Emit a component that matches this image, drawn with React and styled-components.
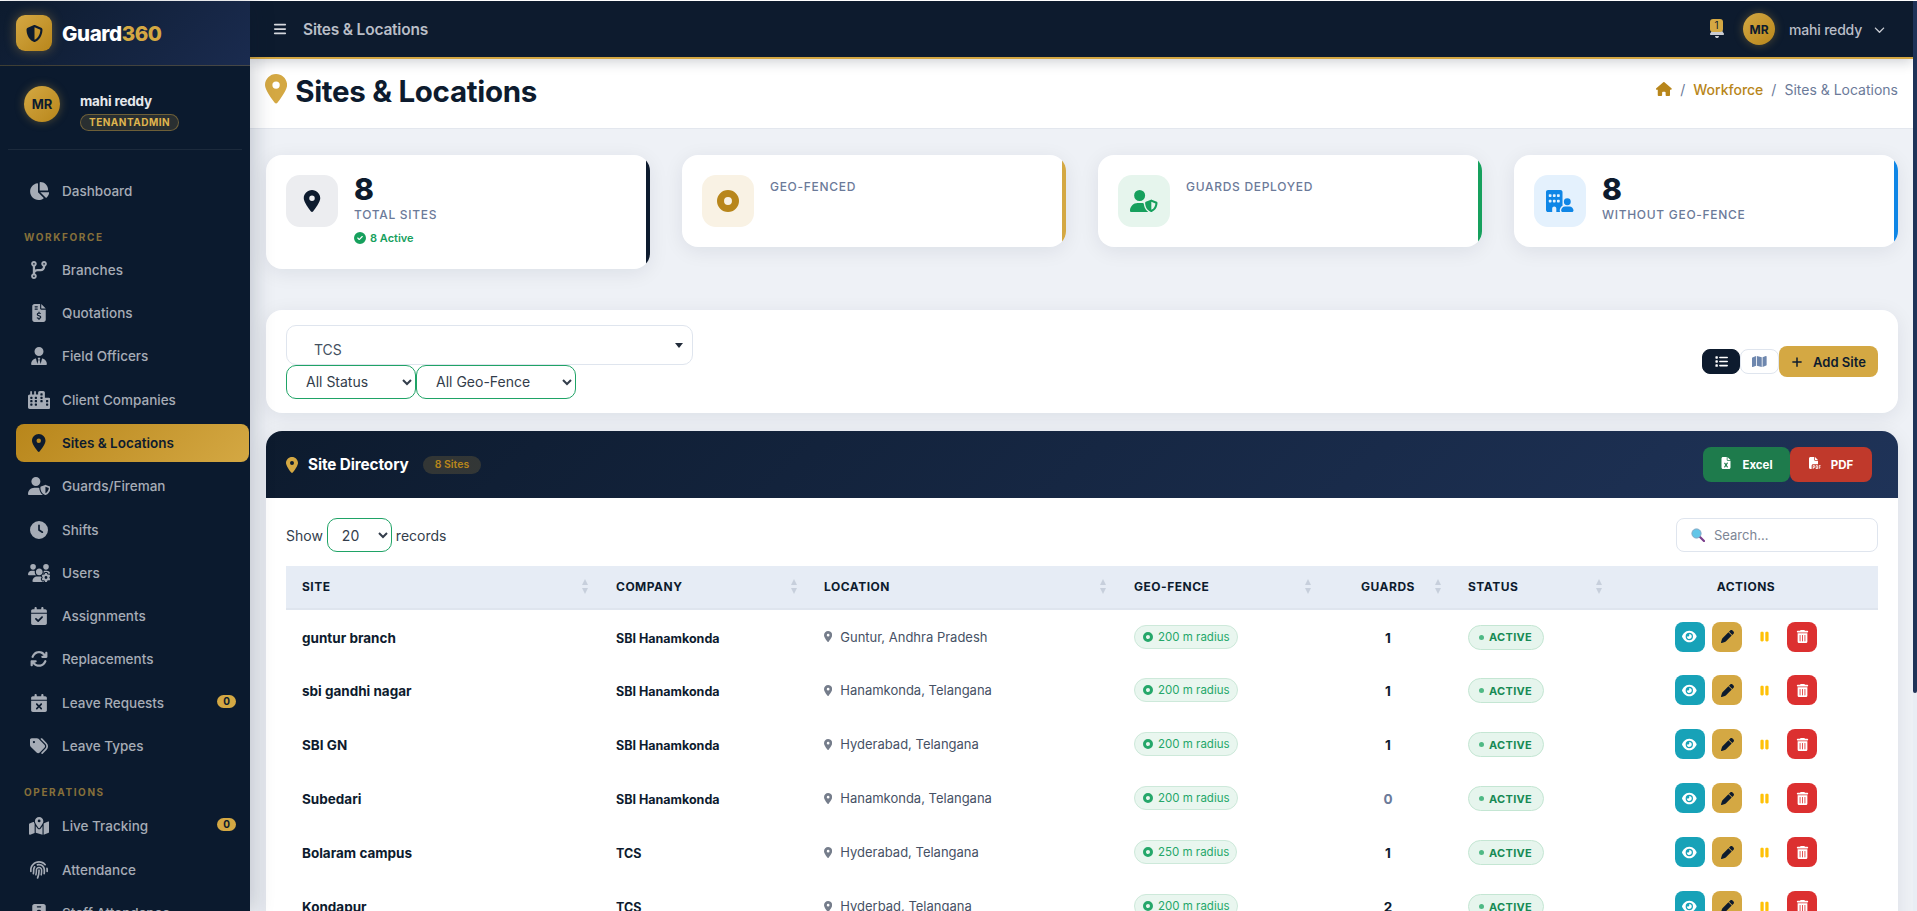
import React from "react";
import styled, { createGlobalStyle } from "styled-components";
import {
  FaArrowsRotate, FaBars, FaBell, FaBuildingUser, FaCalendarCheck, FaCalendarXmark, FaChartPie,
  FaChevronDown, FaCircleCheck, FaCity, FaClock, FaCodeBranch, FaEye, FaFileExcel, FaFileInvoiceDollar,
  FaFilePdf, FaFingerprint, FaHouse, FaIdBadge, FaList, FaLocationDot, FaMap, FaMapLocationDot, FaPause,
  FaPen, FaPlus, FaShieldHalved, FaTags, FaTrashCan, FaUserShield, FaUserTie, FaUsersGear,
} from "react-icons/fa6";

const GlobalStyle = createGlobalStyle`
  html, body { margin: 0; padding: 0; height: 100%; overflow: hidden; background: #fff; }
  body { font-family: "Inter", "Liberation Sans", sans-serif; color: #0d1b2e; }
  * { box-sizing: border-box; }
`;

// FA glyphs are 1em tall and as wide as they need, react-icons squeezes them in a square
const glyph = (Icon, ratio) => styled(Icon)`
  width: ${ratio}em;
  height: 1em;
  flex: none;
`;

const PinIcon = glyph(FaLocationDot, 0.75);
const PieIcon = glyph(FaChartPie, 1.125);
const CityIcon = glyph(FaCity, 1.25);
const UserShieldIcon = glyph(FaUserShield, 1.25);
const UsersGearIcon = glyph(FaUsersGear, 1.25);
const MapPinIcon = glyph(FaMapLocationDot, 1.125);
const BuildingUserIcon = glyph(FaBuildingUser, 1.25);
const HouseIcon = glyph(FaHouse, 1.125);
const MapIcon = glyph(FaMap, 1.125);
const EyeIcon = glyph(FaEye, 1.125);

const Shell = styled.div`
  display: flex;
  height: 911px;
  padding-top: 1px;
  overflow: hidden;
  background: #fff;
`;

const Sidebar = styled.aside`
  width: 250px;
  flex: none;
  background: #0b1a2e;
  position: relative;
  z-index: 3;
  box-shadow: 4px 0 20px rgba(13, 27, 46, 0.2);
  overflow: hidden;
`;

const Brand = styled.div`
  height: 65px;
  display: flex;
  align-items: center;
  gap: 10px;
  padding: 0 16px;
  background: linear-gradient(135deg, #0d1b2e, #1a2b4f);
  border-bottom: 1px solid rgba(212, 168, 67, 0.25);
`;

const BrandMark = styled.div`
  width: 36px;
  height: 36px;
  border-radius: 9px;
  display: flex;
  align-items: center;
  justify-content: center;
  color: #0d1b2e;
  font-size: 17px;
  background: linear-gradient(135deg, #d4a843, #b8861b);
  box-shadow: 0 0 12px rgba(212, 168, 67, 0.4);
`;

const BrandName = styled.div`
  font-size: 20.5px;
  font-weight: 800;
  letter-spacing: -0.4px;
  color: #fff;
  span { color: #d4a843; }
`;

const Profile = styled.div`
  margin: 0 8px;
  height: 84px;
  display: flex;
  align-items: flex-start;
  gap: 20px;
  padding: 20px 0 0 16px;
  border-bottom: 1px solid rgba(255, 255, 255, 0.07);
`;

const Avatar = styled.div`
  width: ${(p) => p.size}px;
  height: ${(p) => p.size}px;
  flex: none;
  border-radius: 50%;
  display: flex;
  align-items: center;
  justify-content: center;
  font-size: ${(p) => (p.size > 32 ? 13 : 12)}px;
  font-weight: 700;
  color: #0d1b2e;
  background: linear-gradient(135deg, #d4a843, #b8861b);
  box-shadow: 0 0 10px rgba(212, 168, 67, 0.35);
`;

const ProfileName = styled.div`
  font-size: 13.5px;
  font-weight: 700;
  letter-spacing: -0.2px;
  color: #e6e8ec;
  line-height: 18px;
  margin-top: 6px;
`;

const RoleBadge = styled.div`
  display: inline-block;
  height: 17px;
  line-height: 15px;
  padding: 0 8px;
  margin-top: 2px;
  border-radius: 9px;
  border: 1px solid rgba(212, 168, 67, 0.4);
  background: rgba(212, 168, 67, 0.15);
  color: #dfb44e;
  font-size: 10px;
  font-weight: 700;
  letter-spacing: 0.5px;
`;

const Nav = styled.nav`
  padding: 21.5px 0 0 16px;
  display: flex;
  flex-direction: column;
`;

const SectionLabel = styled.div`
  height: 18px;
  line-height: 18px;
  margin: ${(p) => (p.first ? "13px 0 5px 8px" : "13px 0 6px 8px")};
  font-size: 10px;
  font-weight: 700;
  letter-spacing: 1.6px;
  color: #86703a;
`;

const NavItem = styled.div`
  height: 38px;
  margin-bottom: 5.3px;
  width: 233px;
  flex: none;
  display: flex;
  align-items: center;
  padding: 0 13px 0 12px;
  border-radius: 8px;
  font-size: 13.5px;
  font-weight: ${(p) => (p.active ? 600 : 500)};
  color: ${(p) => (p.active ? "#0d1b2e" : "#a6acb6")};
  background: ${(p) => (p.active ? "linear-gradient(135deg, #b8861b, #d4a843)" : "transparent")};
`;

const NavIcon = styled.span`
  width: 22px;
  margin-right: 12px;
  flex: none;
  display: flex;
  justify-content: center;
  font-size: 18px;
`;

const NavCount = styled.span`
  margin-left: auto;
  margin-top: -3px;
  width: 19px;
  height: 13px;
  border-radius: 7px;
  background: #d4a843;
  color: #0d1b2e;
  font-size: 10px;
  font-weight: 700;
  line-height: 13px;
  text-align: center;
`;

const Main = styled.main`
  flex: 1;
  min-width: 0;
  background: #eef1f6;
  overflow: hidden;
`;

const Topbar = styled.header`
  height: 58px;
  display: flex;
  align-items: center;
  padding: 0 28px 0 23px;
  background: #0d1b2e;
  border-bottom: 2px solid #d4a843;
  position: relative;
  z-index: 2;
  box-shadow: 0 3px 12px rgba(13, 27, 46, 0.2);
`;

const MenuIcon = styled.span`
  display: flex;
  color: #d5d8dd;
  font-size: 14px;
  margin-right: 16px;
`;

const TopTitle = styled.div`
  font-size: 15.5px;
  font-weight: 600;
  letter-spacing: -0.2px;
  color: #b9bec7;
`;

const TopRight = styled.div`
  margin-left: auto;
  display: flex;
  align-items: center;
`;

const Bell = styled.div`
  position: relative;
  display: flex;
  color: #c9ccd2;
  font-size: 16px;
  margin: 2px 18px 0 0;
`;

const BellCount = styled.span`
  position: absolute;
  top: -3px;
  left: 1px;
  width: 13px;
  height: 13px;
  border-radius: 3px;
  background: #d4a843;
  color: #0d1b2e;
  font-size: 10px;
  line-height: 13px;
  text-align: center;
`;

const UserName = styled.div`
  margin: 0 12px 0 14px;
  font-size: 14px;
  font-weight: 500;
  letter-spacing: -0.2px;
  color: #b9bec7;
`;

const Chevron = styled.span`
  display: flex;
  color: #c9ccd2;
  font-size: 11px;
`;

const PageHeader = styled.section`
  height: 70px;
  background: #fff;
  border-bottom: 1px solid #e3e7ee;
  display: flex;
  justify-content: space-between;
  padding: 14px 15px 0 15px;
`;

const Title = styled.h1`
  margin: 0;
  height: 36px;
  display: flex;
  align-items: center;
  gap: 8px;
  font-size: 29.5px;
  font-weight: 700;
  letter-spacing: -0.3px;
  color: #0d1b2e;
  svg { color: #d4a843; margin-top: -4px; }
`;

const Crumbs = styled.div`
  display: flex;
  align-items: center;
  height: 32px;
  font-size: 14px;
  color: #6b7a99;
`;

const CrumbSep = styled.span`
  margin: 0 8px;
`;

const CrumbLink = styled.span`
  display: flex;
  color: #b8861b;
  font-weight: 500;
`;

const Content = styled.div`
  padding: 26px 15px 0 16px;
`;

const StatRow = styled.div`
  display: grid;
  grid-template-columns: repeat(4, 1fr);
  gap: 32px;
  align-items: start;
  margin-bottom: 41px;
`;

const StatCard = styled.div`
  position: relative;
  overflow: hidden;
  display: flex;
  gap: 16px;
  padding: 20px;
  background: #fff;
  border-radius: 16px;
  box-shadow: 0 4px 20px rgba(13, 27, 46, 0.08);
  &::after {
    content: "";
    position: absolute;
    top: 0;
    right: 0;
    bottom: 0;
    width: 4px;
    background: ${(p) => p.accent};
  }
`;

const StatIcon = styled.div`
  width: 52px;
  height: 52px;
  flex: none;
  border-radius: 14px;
  display: flex;
  align-items: center;
  justify-content: center;
  font-size: 22px;
  color: ${(p) => p.color};
  background: ${(p) => p.bg};
`;

const StatValue = styled.div`
  font-size: 30px;
  line-height: 28px;
  font-weight: 800;
  color: #0d1b2e;
`;

const StatLabel = styled.div`
  font-size: 12px;
  line-height: 24px;
  font-weight: 500;
  letter-spacing: 0.7px;
  color: #6b7a99;
`;

const StatNote = styled.div`
  display: flex;
  align-items: center;
  gap: 4px;
  height: 22px;
  font-size: 11px;
  font-weight: 600;
  color: #16a05d;
`;

const FilterCard = styled.section`
  height: 103px;
  margin-bottom: 18px;
  padding: 15px 20px;
  display: flex;
  justify-content: space-between;
  align-items: center;
  background: #fff;
  border-radius: 16px;
  box-shadow: 0 4px 20px rgba(13, 27, 46, 0.08);
`;

const FilterFields = styled.div`
  display: flex;
  flex-direction: column;
  align-items: flex-start;
`;

const ComboBox = styled.div`
  position: relative;
  width: 407px;
  height: 40px;
  padding: 16px 0 0 27px;
  border: 1px solid #dfe5ee;
  border-radius: 10px;
  font-size: 14px;
  line-height: 16px;
  color: #44505f;
`;

const ComboArrow = styled.span`
  position: absolute;
  right: 9px;
  top: 17px;
  border-left: 4px solid transparent;
  border-right: 4px solid transparent;
  border-top: 5px solid #222c3a;
`;

const SelectRow = styled.div`
  display: flex;
`;

const GreenSelect = styled.select`
  width: ${(p) => p.w}px;
  height: ${(p) => p.h}px;
  padding: 0 ${(p) => p.pad}px;
  font-family: "Inter", "Liberation Sans", sans-serif;
  font-size: 14px;
  color: #333d4b;
  background: #fff;
  border: 1px solid #1fa366;
  border-radius: 10px;
  outline: none;
`;

const FilterActions = styled.div`
  display: flex;
  align-items: center;
`;

const ViewToggle = styled.button`
  width: ${(p) => p.w}px;
  height: 25px;
  padding: 0;
  display: flex;
  align-items: center;
  justify-content: center;
  font-size: 13px;
  color: ${(p) => (p.active ? "#fff" : "#6e87ae")};
  background: ${(p) => (p.active ? "#0d1b2e" : "#fff")};
  border: 1px solid ${(p) => (p.active ? "#0d1b2e" : "#dfe5ee")};
  border-radius: 8px;
`;

const AddButton = styled.button`
  width: 99px;
  height: 31px;
  padding: 0;
  display: flex;
  align-items: center;
  justify-content: center;
  gap: 10px;
  font-family: inherit;
  font-size: 13px;
  font-weight: 600;
  color: #0d1b2e;
  background: #d4a843;
  border: 0;
  border-radius: 8px;
`;

const TableCard = styled.section`
  background: #fff;
  border-radius: 16px 16px 0 0;
  box-shadow: 0 4px 20px rgba(13, 27, 46, 0.08);
`;

const TableHead = styled.div`
  height: 67px;
  padding: 0 26px 0 20px;
  display: flex;
  align-items: center;
  background: linear-gradient(135deg, #0d1b2e, #1f3358);
  border-radius: 16px 16px 0 0;
`;

const TableTitle = styled.div`
  display: flex;
  align-items: center;
  gap: 10px;
  font-size: 15.3px;
  font-weight: 700;
  letter-spacing: -0.1px;
  color: #fff;
  svg { color: #d4a843; font-size: 16px; }
`;

const CountChip = styled.span`
  margin-left: 14px;
  height: 18px;
  line-height: 18px;
  padding: 0 12px;
  border-radius: 9px;
  background: rgba(212, 168, 67, 0.18);
  color: #b8861b;
  font-size: 10.5px;
  font-weight: 600;
`;

const ExportGroup = styled.div`
  margin-left: auto;
  display: flex;
`;

const ExportButton = styled.button`
  width: ${(p) => p.w}px;
  height: 35px;
  padding: 0;
  display: flex;
  align-items: center;
  justify-content: center;
  gap: 10px;
  font-family: inherit;
  font-size: 11.5px;
  font-weight: 700;
  color: #fff;
  background: ${(p) => p.bg};
  border: 0;
  border-radius: 8px;
  svg { font-size: 12px; margin-top: -4px; }
`;

const TableBody = styled.div`
  padding: 20px 20px 0;
`;

const Controls = styled.div`
  display: flex;
  justify-content: space-between;
  align-items: center;
  height: 34px;
  margin-bottom: 14px;
`;

const ShowLabel = styled.label`
  display: flex;
  align-items: center;
  gap: 4px;
  font-size: 14px;
  color: #333d4b;
`;

const SearchBox = styled.div`
  width: 202px;
  height: 34px;
  display: flex;
  align-items: center;
  gap: 9px;
  padding: 0 14px;
  border: 1px solid #dfe5ee;
  border-radius: 8px;
  font-size: 13px;
  color: #7d8695;
`;

const Table = styled.table`
  width: 1592px;
  border-collapse: collapse;
  table-layout: fixed;
`;

const Th = styled.th`
  position: relative;
  height: 43px;
  padding: 0 ${(p) => p.pr || 16}px 2px ${(p) => p.pl || 16}px;
  background: #e6ecf5;
  border-bottom: 2px solid #dfe5ee;
  text-align: ${(p) => p.align || "left"};
  font-size: 12px;
  font-weight: 700;
  letter-spacing: 0.5px;
  color: #0d1b2e;
`;

const SortMark = styled.span`
  position: absolute;
  top: 13px;
  right: ${(p) => p.right}px;
  display: flex;
  flex-direction: column;
  gap: 3px;
  &::before, &::after {
    content: "";
    border-left: 3.5px solid transparent;
    border-right: 3.5px solid transparent;
  }
  &::before { border-bottom: 6px solid #c7cfdc; }
  &::after { border-top: 6px solid #c7cfdc; }
`;

const Td = styled.td`
  height: 54px;
  padding: 0 ${(p) => p.pr || 16}px 0 ${(p) => p.pl || 16}px;
  text-align: ${(p) => p.align || "left"};
`;

const SiteName = styled.span`
  font-size: 13.5px;
  font-weight: 700;
  color: #0d1b2e;
`;

const CompanyName = styled.span`
  font-size: 12.5px;
  font-weight: 700;
  color: #0d1b2e;
`;

const Place = styled.span`
  display: flex;
  align-items: center;
  gap: 8px;
  font-size: 13px;
  color: #465165;
  svg { color: #757d8b; font-size: 11px; }
`;

const FencePill = styled.span`
  display: inline-flex;
  align-items: center;
  gap: 5px;
  height: 24px;
  padding: 0 7px 0 8px;
  border: 1px solid #cde9da;
  border-radius: 12px;
  background: #e9f6ef;
  font-size: 11.5px;
  color: #25a76a;
`;

const GuardCount = styled.span`
  font-size: 13.5px;
  font-weight: 700;
  color: ${(p) => (p.empty ? "#6b7a99" : "#0d1b2e")};
`;

const StatusPill = styled.span`
  display: inline-flex;
  align-items: center;
  gap: 5px;
  height: 25px;
  padding: 0 11px 0 10px;
  border: 1px solid #c4e6d3;
  border-radius: 13px;
  background: #e6f5ed;
  font-size: 11px;
  font-weight: 700;
  letter-spacing: 0.3px;
  color: #168a54;
  &::before {
    content: "";
    width: 5px;
    height: 5px;
    border-radius: 50%;
    background: #4fb985;
  }
`;

const ActionGroup = styled.div`
  display: flex;
  justify-content: center;
  gap: 7.5px;
`;

const ActionButton = styled.button`
  width: 30px;
  height: 30px;
  padding: 0;
  display: flex;
  align-items: center;
  justify-content: center;
  font-size: 13px;
  color: ${(p) => p.color};
  background: ${(p) => p.bg};
  border: 0;
  border-radius: 8px;
`;

const ScrollRail = styled.div`
  width: 4px;
  flex: none;
  background: #e9edf4;
`;

const ScrollThumb = styled.div`
  height: 692px;
  background: #1f3358;
  border-radius: 0 0 2px 2px;
`;

const Ring = ({ size, hole = 0.36 }) => (
  <svg width={size} height={size} viewBox="0 0 24 24" aria-hidden="true">
    <circle cx="12" cy="12" r={12 - (12 * (1 - hole)) / 2} fill="none" stroke="currentColor" strokeWidth={12 * (1 - hole)} />
  </svg>
);

const Magnifier = () => (
  <svg width="14" height="14" viewBox="0 0 14 14" aria-hidden="true">
    <line x1="8.5" y1="8.5" x2="13" y2="13" stroke="#7b3f8c" strokeWidth="2.2" strokeLinecap="round" />
    <circle cx="5.5" cy="5.5" r="4.6" fill="#62c6e8" stroke="#7fa6c4" strokeWidth="1" />
  </svg>
);

const workforce = [
  { label: "Branches", icon: <FaCodeBranch /> },
  { label: "Quotations", icon: <FaFileInvoiceDollar /> },
  { label: "Field Officers", icon: <FaUserTie /> },
  { label: "Client Companies", icon: <CityIcon /> },
  { label: "Sites & Locations", icon: <PinIcon />, active: true },
  { label: "Guards/Fireman", icon: <UserShieldIcon /> },
  { label: "Shifts", icon: <FaClock /> },
  { label: "Users", icon: <UsersGearIcon /> },
  { label: "Assignments", icon: <FaCalendarCheck /> },
  { label: "Replacements", icon: <FaArrowsRotate /> },
  { label: "Leave Requests", icon: <FaCalendarXmark />, count: 0 },
  { label: "Leave Types", icon: <FaTags /> },
];

const operations = [
  { label: "Live Tracking", icon: <MapPinIcon />, count: 0 },
  { label: "Attendance", icon: <FaFingerprint /> },
  { label: "Staff Attendance", icon: <FaIdBadge /> },
];

const stats = [
  { value: "8", label: "TOTAL SITES", accent: "#0d1b2e", color: "#0d1b2e", bg: "#ecedf0", icon: <FaLocationDot />, note: "8 Active" },
  { label: "GEO-FENCED", accent: "#d4a843", color: "#b8861b", bg: "#f9f2e4", icon: <Ring size={22} /> },
  { label: "GUARDS DEPLOYED", accent: "#16a05d", color: "#16a05d", bg: "#e6f5ed", icon: <UserShieldIcon /> },
  { value: "8", label: "WITHOUT GEO-FENCE", accent: "#0f86e6", color: "#0f86e6", bg: "#e4f1fd", icon: <BuildingUserIcon /> },
];

const columns = [
  { key: "site", label: "SITE", width: 314, sort: 12 },
  { key: "company", label: "COMPANY", width: 208, sort: 11 },
  { key: "location", label: "LOCATION", width: 310, sort: 12 },
  { key: "fence", label: "GEO-FENCE", width: 210, sort: 17 },
  { key: "guards", label: "GUARDS", width: 124, sort: 11, align: "center", pr: 20 },
  { key: "status", label: "STATUS", width: 160, sort: 10 },
  { key: "actions", label: "ACTIONS", width: 266, align: "center", pl: 18 },
];

const sites = [
  { name: "guntur branch", company: "SBI Hanamkonda", place: "Guntur, Andhra Pradesh", radius: 200, guards: 1 },
  { name: "sbi gandhi nagar", company: "SBI Hanamkonda", place: "Hanamkonda, Telangana", radius: 200, guards: 1 },
  { name: "SBI GN", company: "SBI Hanamkonda", place: "Hyderabad, Telangana", radius: 200, guards: 1 },
  { name: "Subedari", company: "SBI Hanamkonda", place: "Hanamkonda, Telangana", radius: 200, guards: 0 },
  { name: "Bolaram campus", company: "TCS", place: "Hyderabad, Telangana", radius: 250, guards: 1 },
  { name: "Kondapur", company: "TCS", place: "Hyderbad, Telangana", radius: 200, guards: 2 },
];

const renderNav = (items) =>
  items.map((item) => (
    <NavItem key={item.label} active={item.active}>
      <NavIcon>{item.icon}</NavIcon>
      {item.label}
      {item.count !== undefined && <NavCount>{item.count}</NavCount>}
    </NavItem>
  ));

export default function App() {
  return (
    <>
      <GlobalStyle />
      <Shell>
        <Sidebar>
          <Brand>
            <BrandMark><FaShieldHalved /></BrandMark>
            <BrandName>Guard<span>360</span></BrandName>
          </Brand>
          <Profile>
            <Avatar size={36}>MR</Avatar>
            <div>
              <ProfileName>mahi reddy</ProfileName>
              <RoleBadge>TENANTADMIN</RoleBadge>
            </div>
          </Profile>
          <Nav>
            <NavItem><NavIcon><PieIcon /></NavIcon>Dashboard</NavItem>
            <SectionLabel first>WORKFORCE</SectionLabel>
            {renderNav(workforce)}
            <SectionLabel>OPERATIONS</SectionLabel>
            {renderNav(operations)}
          </Nav>
        </Sidebar>

        <Main>
          <Topbar>
            <MenuIcon><FaBars /></MenuIcon>
            <TopTitle>Sites &amp; Locations</TopTitle>
            <TopRight>
              <Bell><FaBell /><BellCount>1</BellCount></Bell>
              <Avatar size={32}>MR</Avatar>
              <UserName>mahi reddy</UserName>
              <Chevron><FaChevronDown /></Chevron>
            </TopRight>
          </Topbar>

          <PageHeader>
            <Title><PinIcon />Sites &amp; Locations</Title>
            <Crumbs>
              <CrumbLink><HouseIcon /></CrumbLink>
              <CrumbSep>/</CrumbSep>
              <CrumbLink>Workforce</CrumbLink>
              <CrumbSep>/</CrumbSep>
              Sites &amp; Locations
            </Crumbs>
          </PageHeader>

          <Content>
            <StatRow>
              {stats.map((s) => (
                <StatCard key={s.label} accent={s.accent}>
                  <StatIcon color={s.color} bg={s.bg}>{s.icon}</StatIcon>
                  <div>
                    {s.value && <StatValue>{s.value}</StatValue>}
                    <StatLabel>{s.label}</StatLabel>
                    {s.note && <StatNote><FaCircleCheck size={12} />{s.note}</StatNote>}
                  </div>
                </StatCard>
              ))}
            </StatRow>

            <FilterCard>
              <FilterFields>
                <ComboBox>TCS<ComboArrow /></ComboBox>
                <SelectRow>
                  <GreenSelect w={130} h={34} pad={15} defaultValue="all">
                    <option value="all">All Status</option>
                  </GreenSelect>
                  <GreenSelect w={160} h={34} pad={15} defaultValue="all">
                    <option value="all">All Geo-Fence</option>
                  </GreenSelect>
                </SelectRow>
              </FilterFields>
              <FilterActions>
                <ViewToggle active w={38}><FaList /></ViewToggle>
                <ViewToggle w={39}><MapIcon /></ViewToggle>
                <AddButton><FaPlus size={12} />Add Site</AddButton>
              </FilterActions>
            </FilterCard>

            <TableCard>
              <TableHead>
                <TableTitle><PinIcon />Site Directory</TableTitle>
                <CountChip>8 Sites</CountChip>
                <ExportGroup>
                  <ExportButton w={87} bg="#1e7b4c"><FaFileExcel />Excel</ExportButton>
                  <ExportButton w={82} bg="#c0392b"><FaFilePdf />PDF</ExportButton>
                </ExportGroup>
              </TableHead>
              <TableBody>
                <Controls>
                  <ShowLabel>
                    Show
                    <GreenSelect w={65} h={34} pad={10} defaultValue="20">
                      <option value="20">20</option>
                    </GreenSelect>
                    records
                  </ShowLabel>
                  <SearchBox><Magnifier />Search...</SearchBox>
                </Controls>
                <Table>
                  <colgroup>
                    {columns.map((c) => <col key={c.key} width={c.width} />)}
                  </colgroup>
                  <thead>
                    <tr>
                      {columns.map((c) => (
                        <Th key={c.key} align={c.align} pl={c.pl} pr={c.pr}>
                          {c.label}
                          {c.sort && <SortMark right={c.sort} />}
                        </Th>
                      ))}
                    </tr>
                  </thead>
                  <tbody>
                    {sites.map((site) => (
                      <tr key={site.name}>
                        <Td><SiteName>{site.name}</SiteName></Td>
                        <Td><CompanyName>{site.company}</CompanyName></Td>
                        <Td><Place><PinIcon />{site.place}</Place></Td>
                        <Td><FencePill><Ring size={10} hole={0.4} />{site.radius} m radius</FencePill></Td>
                        <Td align="center" pr={20}><GuardCount empty={site.guards === 0}>{site.guards}</GuardCount></Td>
                        <Td><StatusPill>ACTIVE</StatusPill></Td>
                        <Td pl={18}>
                          <ActionGroup>
                            <ActionButton bg="#17a2b8" color="#fff"><EyeIcon /></ActionButton>
                            <ActionButton bg="#d4a843" color="#0d1b2e"><FaPen /></ActionButton>
                            <ActionButton bg="transparent" color="#ffc107"><FaPause /></ActionButton>
                            <ActionButton bg="#dc3030" color="#fff"><FaTrashCan /></ActionButton>
                          </ActionGroup>
                        </Td>
                      </tr>
                    ))}
                  </tbody>
                </Table>
              </TableBody>
            </TableCard>
          </Content>
        </Main>

        <ScrollRail><ScrollThumb /></ScrollRail>
      </Shell>
    </>
  );
}
